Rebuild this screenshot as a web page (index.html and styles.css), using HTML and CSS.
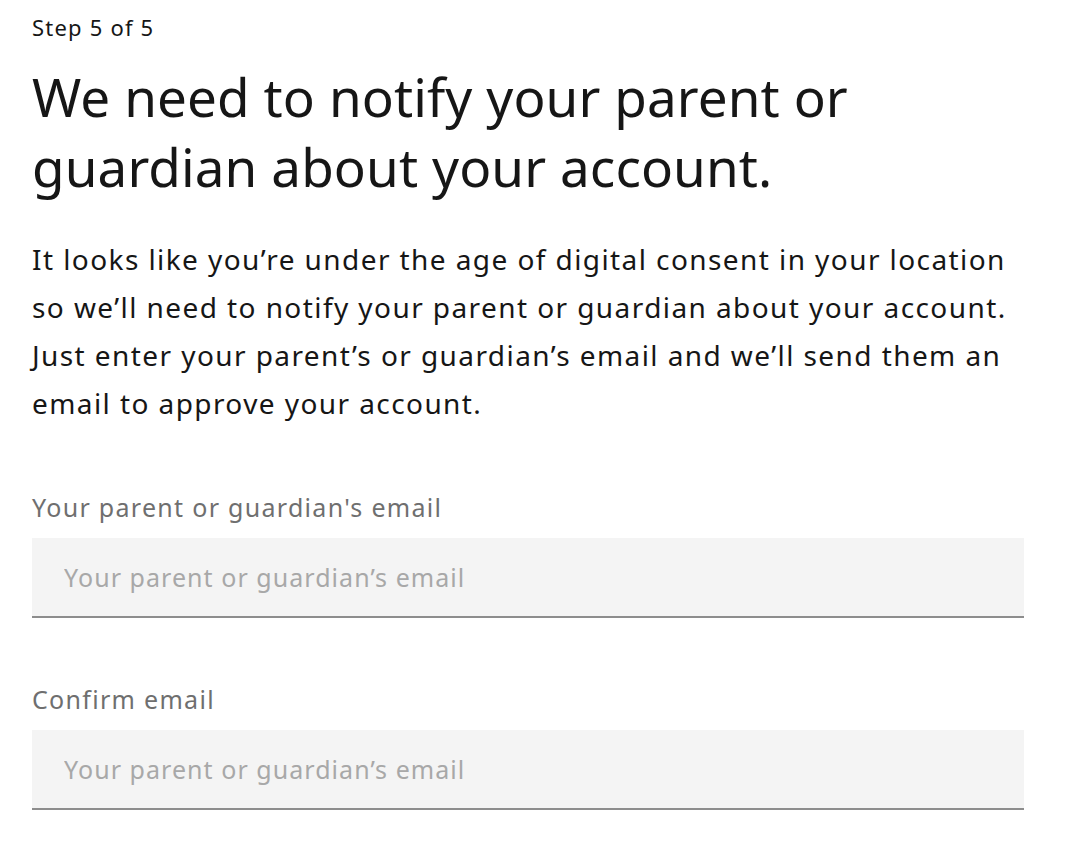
FILE: index.html
```html
<!DOCTYPE html>
<html lang="en">
<head>
<meta charset="utf-8">
<title>Parent or guardian email</title>
<link rel="stylesheet" href="styles.css">
</head>
<body>
<main class="page">
  <p class="step">Step 5 of 5</p>
  <h1 class="title">We need to notify your parent or guardian about your account.</h1>
  <p class="intro">It looks like you’re under the age of digital consent in your location so we’ll need to notify your parent or guardian about your account. Just enter your parent’s or guardian’s email and we’ll send them an email to approve your account.</p>
  <form class="form">
    <div class="field">
      <label class="label" for="email">Your parent or guardian's email</label>
      <input class="input" id="email" type="email" placeholder="Your parent or guardian’s email">
    </div>
    <div class="field">
      <label class="label" for="confirm">Confirm email</label>
      <input class="input" id="confirm" type="email" placeholder="Your parent or guardian’s email">
    </div>
  </form>
</main>
</body>
</html>
```

FILE: styles.css
```css
html, body {
  margin: 0;
  padding: 0;
  background: #ffffff;
}

body {
  font-family: "Noto Sans", "Liberation Sans", sans-serif;
  color: #161616;
}

.page {
  width: 1010px;
  padding: 12px 0 0 32px;
}

.step {
  margin: 0;
  font-size: 22px;
  letter-spacing: 1.2px;
  line-height: 30px;
  color: #161616;
}

.title {
  margin: 20px 0 0;
  font-size: 53px;
  letter-spacing: 0.1px;
  font-weight: 400;
  line-height: 70px;
  color: #161616;
}

.intro {
  margin: 33px 0 0;
  font-size: 28px;
  letter-spacing: 1.42px;
  line-height: 48px;
  color: #161616;
}

.form {
  margin-top: 62px;
  display: flex;
  flex-direction: column;
  gap: 63px;
}

.field {
  display: flex;
  flex-direction: column;
}

.label {
  font-size: 25px;
  letter-spacing: 1.3px;
  line-height: 36px;
  color: #6f6f6f;
  margin-bottom: 13px;
}

.input {
  box-sizing: border-box;
  width: 992px;
  height: 80px;
  margin: 0;
  padding: 0 32px;
  border: none;
  border-bottom: 2px solid #8d8d8d;
  background: #f4f4f4;
  font-family: inherit;
  font-size: 25px;
  letter-spacing: 1.05px;
  color: #161616;
  outline: none;
}

.input::placeholder {
  color: #a8a8a8;
  opacity: 1;
}
```
